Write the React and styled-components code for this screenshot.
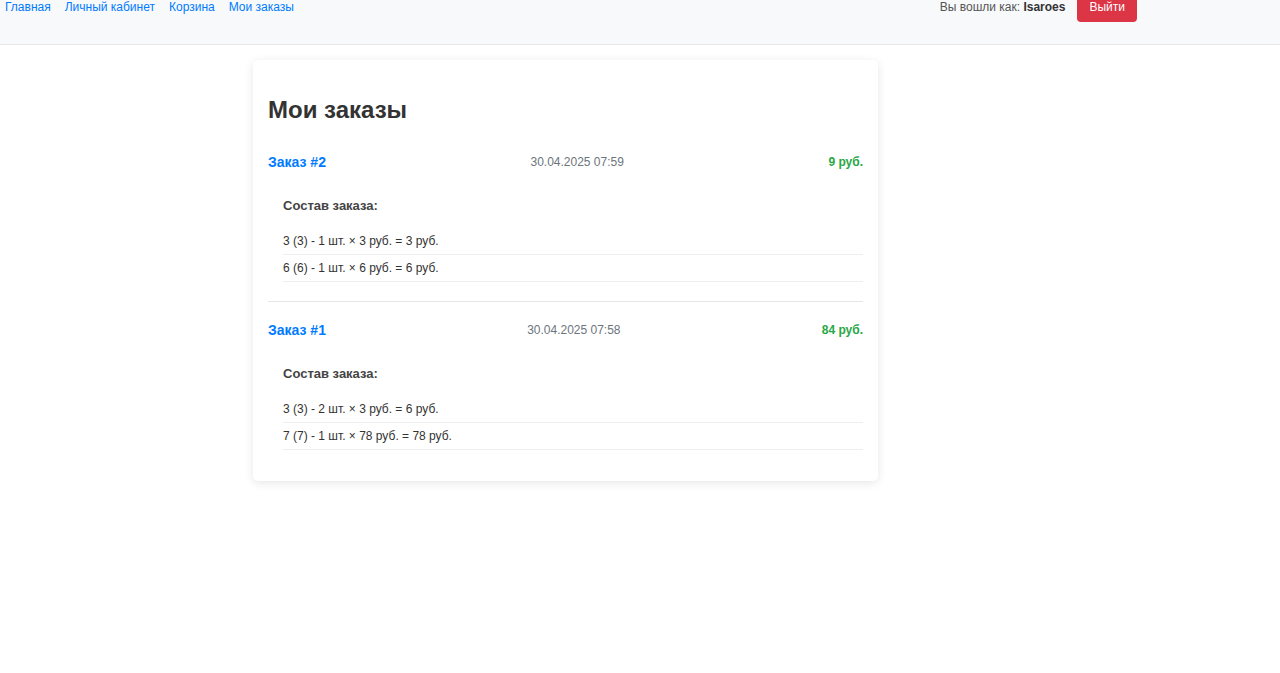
import React from 'react';
import styled, { createGlobalStyle } from 'styled-components';

const orders = [
  {
    id: 2,
    date: '30.04.2025 07:59',
    total: '9 руб.',
    items: ['3 (3) - 1 шт. × 3 руб. = 3 руб.', '6 (6) - 1 шт. × 6 руб. = 6 руб.'],
  },
  {
    id: 1,
    date: '30.04.2025 07:58',
    total: '84 руб.',
    items: ['3 (3) - 2 шт. × 3 руб. = 6 руб.', '7 (7) - 1 шт. × 78 руб. = 78 руб.'],
  },
];

const App = () => {
  return (
    <>
      <GlobalStyle />
      <StNav>
        <StNavRow>
          <StLinks>
            <StNavLink href="#">Главная</StNavLink>
            <StNavLink href="#">Личный кабинет</StNavLink>
            <StNavLink href="#">Корзина</StNavLink>
            <StNavLink href="#">Мои заказы</StNavLink>
          </StLinks>
          <StUser>
            <StUserText>
              Вы вошли как: <b>Isaroes</b>
            </StUserText>
            <StLogout>Выйти</StLogout>
          </StUser>
        </StNavRow>
      </StNav>
      <StMain>
        <StCard>
          <StTitle>Мои заказы</StTitle>
          {orders.map((order) => (
            <StOrder key={order.id}>
              <StOrderHead>
                <StOrderLink href="#">Заказ #{order.id}</StOrderLink>
                <StDate>{order.date}</StDate>
                <StTotal>{order.total}</StTotal>
              </StOrderHead>
              <StDetails>
                <StDetailsTitle>Состав заказа:</StDetailsTitle>
                <StItems>
                  {order.items.map((item, i) => (
                    <StItem key={i}>{item}</StItem>
                  ))}
                </StItems>
              </StDetails>
            </StOrder>
          ))}
        </StCard>
      </StMain>
    </>
  );
};

const GlobalStyle = createGlobalStyle`
  body {
    margin: 0;
    background: #fff;
    font-family: 'Liberation Sans', Arial, sans-serif;
    font-size: 12px;
    color: #333;
  }
`;

const StNav = styled.nav`
  height: 44px;
  background: #f8f9fa;
  border-bottom: 1px solid #e5e7ea;
  padding: 0 143px 0 5px;
`;

const StNavRow = styled.div`
  height: 13px;
  display: flex;
  align-items: center;
  justify-content: space-between;
`;

const StLinks = styled.div`
  display: flex;
  align-items: center;
  gap: 14px;
`;

const StNavLink = styled.a`
  color: #007bff;
  text-decoration: none;
  font-size: 12px;
`;

const StUser = styled.div`
  display: flex;
  align-items: center;
  gap: 12px;
`;

const StUserText = styled.span`
  color: #555;
  font-size: 12px;
  b {
    color: #333;
  }
`;

const StLogout = styled.button`
  height: 31px;
  padding: 0 12px;
  border: none;
  border-radius: 4px;
  background: #dc3545;
  color: #fff;
  font-family: inherit;
  font-size: 12px;
`;

const StMain = styled.main`
  padding: 15px 0 40px 253px;
`;

const StCard = styled.div`
  width: 625px;
  box-sizing: border-box;
  padding: 15px 15px 12px;
  background: #fff;
  border-radius: 5px;
  box-shadow: 0 2px 10px rgba(0, 0, 0, 0.1);
`;

const StTitle = styled.h2`
  margin: 21px 0 10px;
  font-size: 24px;
  line-height: 28px;
  color: #333;
`;

const StOrder = styled.div`
  padding: 20px 0 19px;
  border-bottom: 1px solid #e6e6e6;
  &:last-child {
    border-bottom: none;
  }
`;

const StOrderHead = styled.div`
  display: flex;
  align-items: center;
  justify-content: space-between;
  height: 16px;
`;

const StOrderLink = styled.a`
  color: #007bff;
  font-weight: 700;
  font-size: 14px;
  text-decoration: none;
`;

const StDate = styled.span`
  color: #6c757d;
  font-size: 12px;
`;

const StTotal = styled.span`
  color: #28a745;
  font-weight: 700;
  font-size: 12px;
`;

const StDetails = styled.div`
  margin-top: 28px;
  padding-left: 15px;
`;

const StDetailsTitle = styled.h4`
  margin: 0 0 14px;
  font-size: 13px;
  line-height: 16px;
  color: #444;
`;

const StItems = styled.ul`
  list-style: none;
  margin: 0;
  padding: 0;
`;

const StItem = styled.li`
  padding: 6px 0;
  line-height: 14px;
  border-bottom: 1px solid #eee;
  color: #333;
`;

export default App;
